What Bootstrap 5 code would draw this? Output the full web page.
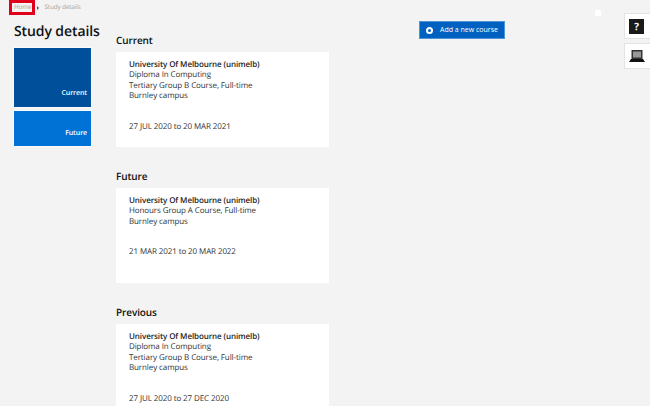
<!DOCTYPE html>
<html lang="en">
<head>
  <meta charset="UTF-8">
  <title>Study details</title>
  <link href="https://cdn.jsdelivr.net/npm/bootstrap@5.3.0/dist/css/bootstrap.min.css" rel="stylesheet">
  <style>
    html, body { height: 406px; overflow: hidden; }
    body {
      font-family: "Open Sans", "Noto Sans", sans-serif;
      background-color: #f3f3f3;
      color: #333;
      font-size: 8px;
      letter-spacing: -0.1px;
      line-height: 10.4px;
      position: relative;
      text-rendering: geometricPrecision;
    }
    .crumbs { height: 15px; padding-left: 14px; color: #a3a3a3; font-size: 6.3px; align-items: center; }
    .crumbs a { color: #a3a3a3; text-decoration: none; }
    .crumb-sep { width: 0; height: 0; margin: 0 5px 0 6px; border-left: 2px solid #555; border-top: 2px solid transparent; border-bottom: 2px solid transparent; }
    .home-mark { position: absolute; left: 9px; top: 0; width: 26px; height: 15px; border: 3px solid #e0001b; }
    .side-col { width: 102px; padding-left: 14px; }
    .page-title { font-size: 14px; line-height: 20px; font-weight: 600; color: #111; margin: 7px 0 6px; white-space: nowrap; }
    .tile { width: 77px; color: #fff; font-size: 7px; font-weight: 600; display: flex; align-items: flex-end; justify-content: flex-end; padding: 0 4px 8px 0; box-shadow: 0 0 0 1px #fafafa; }
    .tile-current { height: 59px; background-color: #004f9b; margin-bottom: 4px; }
    .tile-future { height: 35px; background-color: #0072d6; padding-bottom: 7px; }
    .main-col { width: 213px; margin-left: 14px; margin-top: 2px; }
    .sec-title { font-size: 10px; line-height: 14px; font-weight: 600; color: #111; margin: 0 0 5px 0; }
    .course-box { background-color: #fff; padding: 8px 13px 0; margin-bottom: 22px; height: 95px; }
    .course-name { font-weight: 600; color: #222; }
    .course-date { margin-top: 20px; }
    .add-btn { position: absolute; left: 419px; top: 21px; width: 86px; height: 18px; background-color: #0061c1; color: #fff; font-size: 7px; font-weight: 500; border: 1px solid #4f93d8; border-radius: 0; padding: 0 0 0 20px; text-align: left; line-height: 16px; }
    .add-icon { position: absolute; left: 6px; top: 5px; width: 7px; height: 7px; border-radius: 50%; border: 2px solid #fff; background-color: #0061c1; }
    .dot-mark { position: absolute; left: 595px; top: 10px; width: 6px; height: 6px; background-color: #fff; }
    .side-tool { position: absolute; left: 624px; width: 26px; background-color: #fff; border: 1px solid #e4e4e4; border-right: 0; display: flex; align-items: center; justify-content: center; padding-right: 2px; }
    .tool-help { top: 13px; height: 26px; }
    .tool-laptop { top: 43px; height: 26px; }
    .help-square { width: 15px; height: 15px; background-color: #1a1a1a; color: #fff; font-size: 10px; font-weight: 700; text-align: center; line-height: 15px; }
  </style>
</head>
<body>

<!-- Breadcrumb -->
<div class="crumbs d-flex">
  <a href="#">Home</a>
  <span class="crumb-sep"></span>
  <span>Study details</span>
</div>
<div class="home-mark"></div>

<div class="d-flex">
  <div class="side-col">
    <h1 class="page-title">Study details</h1>
    <div class="tile tile-current">Current</div>
    <div class="tile tile-future">Future</div>
  </div>

  <div class="main-col">
    <section>
      <h2 class="sec-title mt-3">Current</h2>
      <div class="course-box">
        <div class="course-name">University Of Melbourne (unimelb)</div>
        <div>Diploma In Computing</div>
        <div>Tertiary Group B Course, Full-time</div>
        <div>Burnley campus</div>
        <div class="course-date">27 JUL 2020 to 20 MAR 2021</div>
      </div>
    </section>
    <section>
      <h2 class="sec-title">Future</h2>
      <div class="course-box">
        <div class="course-name">University Of Melbourne (unimelb)</div>
        <div>Honours Group A Course, Full-time</div>
        <div>Burnley campus</div>
        <div class="course-date">21 MAR 2021 to 20 MAR 2022</div>
      </div>
    </section>
    <section>
      <h2 class="sec-title">Previous</h2>
      <div class="course-box">
        <div class="course-name">University Of Melbourne (unimelb)</div>
        <div>Diploma In Computing</div>
        <div>Tertiary Group B Course, Full-time</div>
        <div>Burnley campus</div>
        <div class="course-date">27 JUL 2020 to 27 DEC 2020</div>
      </div>
    </section>
  </div>
</div>

<button class="add-btn" type="button"><span class="add-icon"></span>Add a new course</button>
<div class="dot-mark"></div>

<div class="side-tool tool-help"><div class="help-square">?</div></div>
<div class="side-tool tool-laptop">
  <svg width="16" height="12" viewBox="0 0 16 12">
    <path d="M2.5 0h11v9h-11z" fill="#333"/>
    <path d="M4 1.5h8v6H4z" fill="#999"/>
    <path d="M2 9h12l2 3H0z" fill="#111"/>
  </svg>
</div>

<script src="https://cdn.jsdelivr.net/npm/bootstrap@5.3.0/dist/js/bootstrap.bundle.min.js"></script>
</body>
</html>
